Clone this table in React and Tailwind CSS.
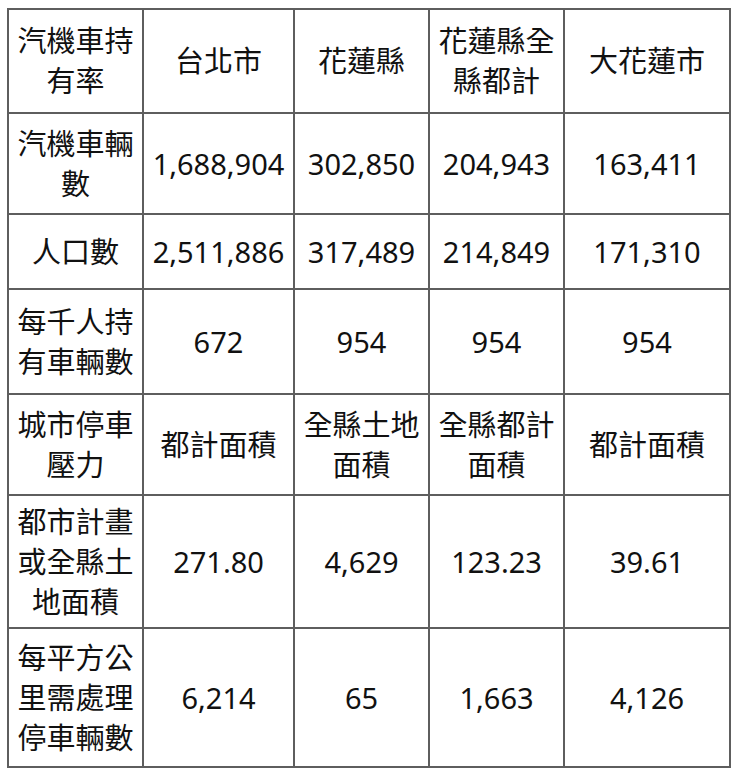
const rows = [
  {
    h: 'h-[102px]',
    cells: [['汽機車持', '有率'], ['台北市'], ['花蓮縣'], ['花蓮縣全', '縣都計'], ['大花蓮市']],
  },
  {
    h: 'h-[99px]',
    cells: [['汽機車輛', '數'], ['1,688,904'], ['302,850'], ['204,943'], ['163,411']],
  },
  {
    h: 'h-[73px]',
    cells: [['人口數'], ['2,511,886'], ['317,489'], ['214,849'], ['171,310']],
  },
  {
    h: 'h-[103px]',
    cells: [['每千人持', '有車輛數'], ['672'], ['954'], ['954'], ['954']],
  },
  {
    h: 'h-[99px]',
    cells: [['城市停車', '壓力'], ['都計面積'], ['全縣土地', '面積'], ['全縣都計', '面積'], ['都計面積']],
  },
  {
    h: 'h-[131px]',
    cells: [['都市計畫', '或全縣土', '地面積'], ['271.80'], ['4,629'], ['123.23'], ['39.61']],
  },
  {
    h: 'h-[137px]',
    cells: [['每平方公', '里需處理', '停車輛數'], ['6,214'], ['65'], ['1,663'], ['4,126']],
  },
];

export default function App() {
  return (
    <div className="min-h-[778px] w-[740px] bg-white pl-[7px] pt-[8px]">
      <div
        className="grid w-[724px] grid-cols-[133px_149px_133px_133px_164px] gap-[2px] bg-[#5e5e5e] p-[2px] text-[29px] leading-[40px] text-[#111]"
        style={{ fontFamily: '"Noto Sans", "Noto Sans CJK TC", sans-serif' }}
      >
        {rows.map((row, i) =>
          row.cells.map((lines, j) => (
            <div
              key={`${i}-${j}`}
              className={`${row.h} flex flex-col items-center justify-center bg-white text-center whitespace-nowrap`}
            >
              {lines.map((line) => (
                <span key={line}>{line}</span>
              ))}
            </div>
          ))
        )}
      </div>
    </div>
  );
}
